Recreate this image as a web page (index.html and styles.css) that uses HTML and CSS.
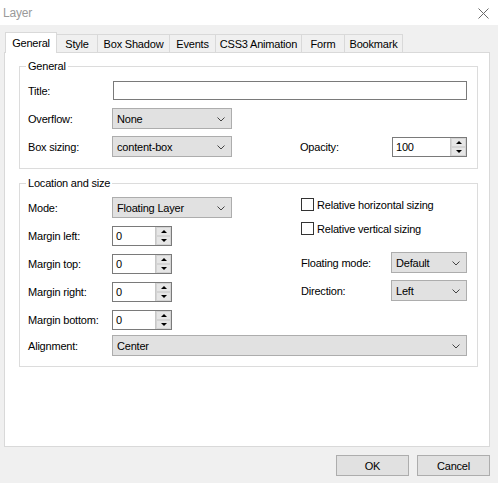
FILE: index.html
```html
<!DOCTYPE html>
<html lang="en">
<head>
    <meta charset="UTF-8">
    <title>Layer</title>
    <link rel="stylesheet" href="styles.css">
</head>
<body>
    <div class="titlebar">
        <span class="title">Layer</span>
        <svg class="close" width="11" height="11" viewBox="0 0 11 11">
            <path d="M0.5 0.5L10.5 10.5M10.5 0.5L0.5 10.5" stroke="#6a6a6a" stroke-width="1" fill="none"/>
        </svg>
    </div>

    <div class="tabs">
        <div class="tab active">General</div>
        <div class="tab">Style</div>
        <div class="tab">Box Shadow</div>
        <div class="tab">Events</div>
        <div class="tab">CSS3 Animation</div>
        <div class="tab">Form</div>
        <div class="tab">Bookmark</div>
    </div>

    <div class="panel">
        <fieldset class="group group-general">
            <legend>General</legend>
            <div class="group-body">
                <div class="row">
                    <label class="lbl">Title:</label>
                    <div class="textbox"></div>
                </div>
                <div class="row row-select">
                    <label class="lbl">Overflow:</label>
                    <div class="select w-120">
                        <span>None</span>
                        <svg width="8" height="5" viewBox="0 0 8 5"><path d="M0.5 0.5L4 4L7.5 0.5" stroke="#444" fill="none"/></svg>
                    </div>
                </div>
                <div class="row row-select">
                    <label class="lbl">Box sizing:</label>
                    <div class="select w-120">
                        <span>content-box</span>
                        <svg width="8" height="5" viewBox="0 0 8 5"><path d="M0.5 0.5L4 4L7.5 0.5" stroke="#444" fill="none"/></svg>
                    </div>
                    <div class="right-field">
                        <label class="lbl-right">Opacity:</label>
                        <div class="spin w-75">
                            <span class="val">100</span>
                            <div class="spin-btns">
                                <div class="spin-btn up"></div>
                                <div class="spin-btn down"></div>
                            </div>
                        </div>
                    </div>
                </div>
            </div>
        </fieldset>

        <fieldset class="group group-location">
            <legend>Location and size</legend>
            <div class="group-body">
                <div class="columns">
                    <div class="col-left">
                        <div class="row row-select">
                            <label class="lbl">Mode:</label>
                            <div class="select w-120">
                                <span>Floating Layer</span>
                                <svg width="8" height="5" viewBox="0 0 8 5"><path d="M0.5 0.5L4 4L7.5 0.5" stroke="#444" fill="none"/></svg>
                            </div>
                        </div>
                        <div class="row">
                            <label class="lbl">Margin left:</label>
                            <div class="spin w-60">
                                <span class="val">0</span>
                                <div class="spin-btns">
                                    <div class="spin-btn up"></div>
                                    <div class="spin-btn down"></div>
                                </div>
                            </div>
                        </div>
                        <div class="row">
                            <label class="lbl">Margin top:</label>
                            <div class="spin w-60">
                                <span class="val">0</span>
                                <div class="spin-btns">
                                    <div class="spin-btn up"></div>
                                    <div class="spin-btn down"></div>
                                </div>
                            </div>
                        </div>
                        <div class="row">
                            <label class="lbl">Margin right:</label>
                            <div class="spin w-60">
                                <span class="val">0</span>
                                <div class="spin-btns">
                                    <div class="spin-btn up"></div>
                                    <div class="spin-btn down"></div>
                                </div>
                            </div>
                        </div>
                        <div class="row">
                            <label class="lbl">Margin bottom:</label>
                            <div class="spin w-60">
                                <span class="val">0</span>
                                <div class="spin-btns">
                                    <div class="spin-btn up"></div>
                                    <div class="spin-btn down"></div>
                                </div>
                            </div>
                        </div>
                    </div>

                    <div class="col-right">
                        <div class="check-row">
                            <span class="checkbox"></span>
                            <span>Relative horizontal sizing</span>
                        </div>
                        <div class="check-row check-second">
                            <span class="checkbox"></span>
                            <span>Relative vertical sizing</span>
                        </div>
                        <div class="row row-select floating">
                            <label class="lbl-right">Floating mode:</label>
                            <div class="select w-76">
                                <span>Default</span>
                                <svg width="8" height="5" viewBox="0 0 8 5"><path d="M0.5 0.5L4 4L7.5 0.5" stroke="#444" fill="none"/></svg>
                            </div>
                        </div>
                        <div class="row row-select direction">
                            <label class="lbl-right">Direction:</label>
                            <div class="select w-76">
                                <span>Left</span>
                                <svg width="8" height="5" viewBox="0 0 8 5"><path d="M0.5 0.5L4 4L7.5 0.5" stroke="#444" fill="none"/></svg>
                            </div>
                        </div>
                    </div>
                </div>

                <div class="row row-select alignment">
                    <label class="lbl">Alignment:</label>
                    <div class="select grow">
                        <span>Center</span>
                        <svg width="8" height="5" viewBox="0 0 8 5"><path d="M0.5 0.5L4 4L7.5 0.5" stroke="#444" fill="none"/></svg>
                    </div>
                </div>
            </div>
        </fieldset>
    </div>

    <div class="actions">
        <button class="btn">OK</button>
        <button class="btn">Cancel</button>
    </div>
</body>
</html>
```

FILE: styles.css
```css
* {
    margin: 0;
    padding: 0;
    box-sizing: border-box;
}

body {
    width: 498px;
    height: 483px;
    overflow: hidden;
    background: #f0f0f0;
    font-family: 'Liberation Sans', Arial, sans-serif;
    font-size: 11px;
    letter-spacing: -0.2px;
    color: #000;
}

.titlebar {
    height: 25px;
    background: #fff;
    display: flex;
    align-items: center;
    justify-content: space-between;
    padding: 0 9px 0 3px;
}

.title {
    font-size: 12px;
    color: #9a9a9a;
}

.close {
    margin-top: 1px;
}

/* tab strip */
.tabs {
    display: flex;
    align-items: flex-end;
    height: 20px;
    margin-top: 7px;
    padding-left: 5px;
}

.tab {
    height: 18px;
    margin-left: -1px;
    border: 1px solid #d9d9d9;
    border-bottom: none;
    background: #f0f0f0;
    display: flex;
    align-items: center;
    justify-content: center;
}

.tab:nth-child(1) { width: 52px; margin-left: 0; }
.tab:nth-child(2) { width: 42px; }
.tab:nth-child(3) { width: 73px; }
.tab:nth-child(4) { width: 47px; }
.tab:nth-child(5) { width: 87px; }
.tab:nth-child(6) { width: 44px; }
.tab:nth-child(7) { width: 59px; }

.tab.active {
    height: 21px;
    margin-bottom: -1px;
    background: #fff;
    position: relative;
    z-index: 1;
    padding-bottom: 1px;
}

.panel {
    margin-left: 4px;
    width: 486px;
    height: 395px;
    background: #fff;
    border: 1px solid #d9d9d9;
    padding-left: 14px;
}

/* group boxes */
.group {
    width: 459px;
    border: 1px solid #dcdcdc;
}

.group legend {
    margin-left: 6px;
    padding: 0 2px;
    line-height: 13px;
}

.group-general {
    margin-top: 7px;
}

.group-location {
    margin-top: 8px;
}

.group-body {
    padding: 0 10px 0 8px;
}

.group-general .group-body {
    padding-top: 8px;
    padding-bottom: 11px;
    display: flex;
    flex-direction: column;
    gap: 8px;
}

.group-general .row-select:last-child {
    margin-top: -1px;
}

.group-location .group-body {
    padding-top: 7px;
    padding-bottom: 10px;
}

.row {
    display: flex;
    align-items: center;
    height: 19px;
}

.row-select {
    height: 21px;
}

.lbl {
    width: 84px;
    flex-shrink: 0;
}

.lbl-right {
    width: 90px;
    flex-shrink: 0;
}

.textbox {
    flex: 1;
    height: 19px;
    margin-left: 1px;
    border: 1px solid #7a7a7a;
    background: #fff;
}

.select {
    height: 21px;
    border: 1px solid #adadad;
    background: #e1e1e1;
    display: flex;
    align-items: center;
    justify-content: space-between;
    padding: 0 6px 0 4px;
}

.select svg {
    margin-top: 1px;
}

.w-120 { width: 120px; }
.w-76 { width: 76px; }
.w-75 { width: 75px; }
.w-60 { width: 60px; }

.grow {
    flex: 1;
}

.right-field {
    margin-left: auto;
    display: flex;
    align-items: center;
}

.right-field .lbl-right {
    width: 92px;
}

/* spin boxes */
.spin {
    height: 20px;
    display: flex;
    border: 1px solid #7a7a7a;
    background: #fff;
}

.spin .val {
    flex: 1;
    padding-left: 3px;
    line-height: 18px;
}

.spin-btns {
    width: 16px;
    display: flex;
    flex-direction: column;
    border-left: 1px solid #c8c8c8;
}

.spin-btn {
    flex: 1;
    background: #e6e6e6;
    border: 1px solid #d4d4d4;
    display: flex;
    align-items: center;
    justify-content: center;
}

.spin-btn.up::after {
    content: '';
    border-left: 3px solid transparent;
    border-right: 3px solid transparent;
    border-bottom: 3px solid #000;
}

.spin-btn.down::after {
    content: '';
    border-left: 3px solid transparent;
    border-right: 3px solid transparent;
    border-top: 3px solid #000;
}

/* location columns */
.columns {
    display: flex;
}

.col-left {
    display: flex;
    flex-direction: column;
    gap: 8px;
}

.col-left .row {
    height: 20px;
}

.col-left .row-select {
    height: 21px;
}

.col-right {
    margin-left: auto;
    width: 166px;
    display: flex;
    flex-direction: column;
}

.check-row {
    height: 15px;
    display: flex;
    align-items: center;
    gap: 3px;
}

.check-second {
    margin-top: 9px;
}

.checkbox {
    width: 13px;
    height: 13px;
    border: 1px solid #333;
    background: #fff;
}

.floating {
    margin-top: 16px;
}

.direction {
    margin-top: 7px;
}

.alignment {
    margin-top: 5px;
}

/* dialog buttons */
.actions {
    display: flex;
    justify-content: flex-end;
    gap: 8px;
    margin-top: 8px;
    padding-right: 8px;
}

.btn {
    width: 73px;
    height: 21px;
    border: 1px solid #adadad;
    background: #e1e1e1;
    font-family: inherit;
    font-size: 11px;
    letter-spacing: -0.2px;
    color: #000;
}
```
